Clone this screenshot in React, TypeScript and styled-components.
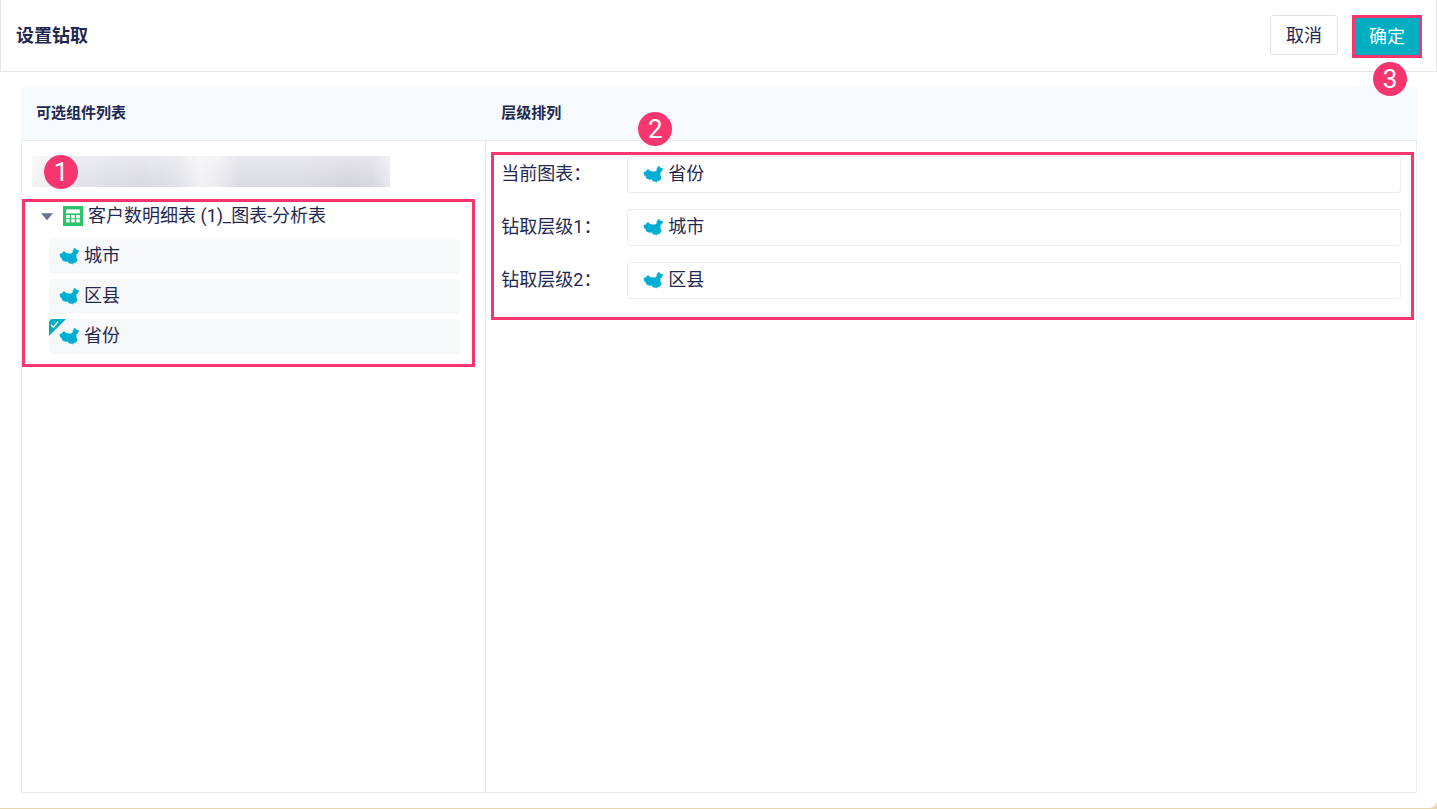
import React, { useState } from "react";
import styled, { createGlobalStyle } from "styled-components";

const ACCENT = "#00adc1";
const MARK = "#f7366f";
const TEXT = "#1f2850";
const LINE = "#ececee";

const GlobalStyle = createGlobalStyle`
  *, *::before, *::after { box-sizing: border-box; }
  body {
    margin: 0;
    background: #e5d6ae;
    color: ${TEXT};
    font-family: Roboto, "Noto Sans CJK SC", sans-serif;
    font-size: 18px;
    line-height: 26px;
  }
  button { font: inherit; color: inherit; cursor: pointer; }
`;

const Page = styled.div`
  min-height: 100vh;
  display: flex;
  flex-direction: column;
  border-bottom: 1px solid #e5d6ae;
`;

const Dialog = styled.div`
  flex: 1;
  display: flex;
  flex-direction: column;
  background: #fff;
  border-bottom-right-radius: 8px;
`;

const Header = styled.header`
  display: flex;
  justify-content: space-between;
  align-items: flex-start;
  height: 72px;
  padding: 15px 14px 0 15px;
  border: 1px solid #e6e6ea;
  border-top: 0;
`;

const Title = styled.h1`
  margin: 0;
  font-size: 18px;
  line-height: 41px;
`;

const Actions = styled.div`
  display: flex;
  align-items: flex-start;
  gap: 14px;
`;

const Button = styled.button`
  height: 40px;
  padding: 2px 15px 0;
  background: #fff;
  border: 1px solid #e1e3ec;
  border-radius: 3px;
`;

const ConfirmButton = styled(Button)`
  position: relative;
  height: 43px;
  padding: 0 14px;
  background: ${ACCENT};
  color: #fff;
  border: 3px solid ${MARK};
  border-radius: 0;
`;

const Badge = styled.span<{ $left: number; $top: number }>`
  position: absolute;
  left: ${(p) => p.$left}px;
  top: ${(p) => p.$top}px;
  width: 34px;
  height: 34px;
  border-radius: 50%;
  background: ${MARK};
  color: #fff;
  font-size: 26px;
  line-height: 34px;
  text-align: center;
`;

const Board = styled.main`
  flex: 1;
  display: grid;
  grid-template-columns: minmax(0, 1fr) minmax(0, 2fr);
  margin: 15px 20px 15px 21px;
`;

const Panel = styled.section`
  display: flex;
  flex-direction: column;
  min-width: 0;
`;

const PanelTitle = styled.h2`
  margin: 0;
  height: 53px;
  padding: 0 15px;
  background: #f6fafd;
  font-size: 15px;
  line-height: 52px;
`;

const PanelBody = styled.div<{ $first?: boolean }>`
  flex: 1;
  border: 1px solid ${LINE};
  border-left-width: ${(p) => (p.$first ? 1 : 0)}px;
`;

const MaskedName = styled.div`
  max-width: 358px;
  height: 31px;
  margin: 15px 10px 12px;
  background: linear-gradient(
      to bottom,
      rgba(255, 255, 255, 0.4),
      rgba(255, 255, 255, 0)
    ),
    linear-gradient(
      to right,
      #f4f4f6 0%,
      #e2e3e8 12%,
      #d9dae0 30%,
      #dfe0e5 40%,
      #f1f1f3 47%,
      #ededf0 51%,
      #dadbe1 58%,
      #dadbe1 75%,
      #d3d3db 88%,
      #d6d7de 95%,
      #e8e8ed 100%
    );
`;

const Marked = styled.div`
  position: relative;
  border: 3px solid ${MARK};
`;

const Tree = styled(Marked)`
  margin-right: 10px;
  padding: 0 12px 10px 24px;
`;

const Levels = styled(Marked)`
  margin: 11px 2px 0 5px;
  padding: 1px 10px 18px 7px;
`;

const TreeToggle = styled.button`
  display: flex;
  align-items: center;
  height: 28px;
  margin-left: -8px;
  padding: 0;
  background: none;
  border: 0;
  white-space: nowrap;
`;

const Caret = styled.svg<{ $open: boolean }>`
  margin-right: 10px;
  transform: ${(p) => (p.$open ? "none" : "rotate(-90deg)")};
`;

const SheetSvg = styled.svg`
  margin-right: 5px;
`;

const FieldList = styled.ul`
  display: grid;
  gap: 5px;
  margin: 9px 0 0;
  padding: 0;
  list-style: none;
`;

const FieldButton = styled.button`
  position: relative;
  display: flex;
  align-items: center;
  gap: 5px;
  width: 100%;
  height: 35px;
  padding: 0 10px 2px;
  background: #f7f8fa;
  border: 0;
  border-radius: 4px;
  overflow: hidden;
`;

const Corner = styled.svg`
  position: absolute;
  left: 0;
  top: 0;
`;

const LevelList = styled.dl`
  display: grid;
  grid-template-columns: 126px minmax(0, 1fr);
  row-gap: 16px;
  margin: 0;
`;

const LevelName = styled.dt`
  line-height: 36px;
  white-space: nowrap;
`;

const LevelField = styled.dd`
  display: flex;
  align-items: center;
  gap: 5px;
  height: 37px;
  margin: 0;
  padding: 0 15px 2px;
  border: 1px solid ${LINE};
  border-radius: 3px;
`;

function MapIcon() {
  return (
    <svg width="20" height="20" viewBox="0 0 20 20" aria-hidden="true">
      <path
        fill="#00aed3"
        d="M0.6 8 L2.6 7.4 L4.2 5.4 L5.8 5.6 L7 7 L9.4 7.6 L12 7.4 L13.6 6.6 L13.8 5.6 L13.2 5 L14.4 4 L14.8 2.4 L16.2 2 L17.4 3.8 L20 4.2 L19.4 6.4 L18 8 L16.8 9.2 L18 9.8 L17.2 11 L18.4 13 L18 15.2 L16.4 16.8 L14.4 17.2 L13.2 18.4 L12.2 17.4 L10 17.4 L8.8 15.6 L7.2 15.8 L5 15.2 L3 14 L2.6 12 L1.4 11.4 L0.8 9.8 Z"
      />
    </svg>
  );
}

function SheetIcon() {
  return (
    <SheetSvg width="20" height="20" viewBox="0 0 20 20" aria-hidden="true">
      <rect width="20" height="20" fill="#2bc46d" />
      <rect x="3.2" y="3.4" width="13.6" height="4" fill="#fff" />
      {[9, 13.2].map((y) =>
        [3.2, 8.2, 13.2].map((x) => (
          <rect key={`${x}-${y}`} x={x} y={y} width="3.6" height="3.2" fill="#fff" />
        ))
      )}
    </SheetSvg>
  );
}

const fields = [
  { name: "城市", used: false },
  { name: "区县", used: false },
  { name: "省份", used: true },
];

const levels = [
  { label: "当前图表：", field: "省份" },
  { label: "钻取层级1：", field: "城市" },
  { label: "钻取层级2：", field: "区县" },
];

export default function App() {
  const [open, setOpen] = useState(true);
  return (
    <>
      <GlobalStyle />
      <Page lang="zh-CN">
        <Dialog>
          <Header>
            <Title>设置钻取</Title>
            <Actions>
              <Button type="button">取消</Button>
              <ConfirmButton type="button">
                确定
                <Badge $left={18} $top={44}>3</Badge>
              </ConfirmButton>
            </Actions>
          </Header>
          <Board>
            <Panel>
              <PanelTitle>可选组件列表</PanelTitle>
              <PanelBody $first>
                <MaskedName />
                <Tree>
                  <Badge $left={19} $top={-47}>1</Badge>
                  <TreeToggle type="button" aria-expanded={open} onClick={() => setOpen(!open)}>
                    <Caret $open={open} width="12" height="10" viewBox="0 0 12 10" aria-hidden="true">
                      <path d="M0 2.3H12L6 9.3Z" fill="#6b7290" />
                    </Caret>
                    <SheetIcon />
                    客户数明细表 (1)_图表-分析表
                  </TreeToggle>
                  {open && (
                    <FieldList>
                      {fields.map((f) => (
                        <li key={f.name}>
                          <FieldButton type="button" aria-pressed={f.used}>
                            {f.used && (
                              <Corner width="17" height="17" viewBox="0 0 17 17" aria-hidden="true">
                                <path d="M0 0H17L0 17Z" fill={ACCENT} />
                                <path d="M2 6L4.5 8.2L9 2.6" fill="none" stroke="#fff" strokeWidth="1.5" />
                              </Corner>
                            )}
                            <MapIcon />
                            {f.name}
                          </FieldButton>
                        </li>
                      ))}
                    </FieldList>
                  )}
                </Tree>
              </PanelBody>
            </Panel>
            <Panel>
              <PanelTitle>层级排列</PanelTitle>
              <PanelBody>
                <Levels>
                  <Badge $left={144} $top={-43}>2</Badge>
                  <LevelList>
                    {levels.map((l) => (
                      <React.Fragment key={l.label}>
                        <LevelName>{l.label}</LevelName>
                        <LevelField>
                          <MapIcon />
                          {l.field}
                        </LevelField>
                      </React.Fragment>
                    ))}
                  </LevelList>
                </Levels>
              </PanelBody>
            </Panel>
          </Board>
        </Dialog>
      </Page>
    </>
  );
}
